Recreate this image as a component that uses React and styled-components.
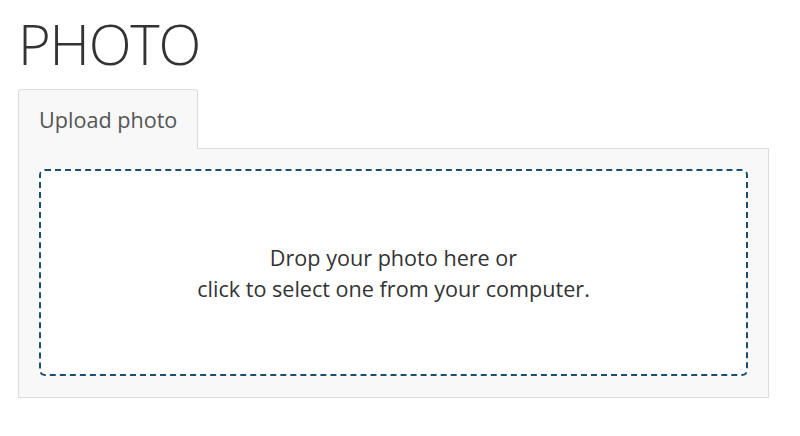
import React from 'react';
import styled, { createGlobalStyle } from 'styled-components';

const GlobalStyle = createGlobalStyle`
  body {
    margin: 0;
    background: #fff;
    font-family: "Open Sans", "Liberation Sans", sans-serif;
    color: #333;
  }
`;

const Page = styled.div`
  padding: 10px 18px 0 18px;
  width: 751px;
`;

const Title = styled.h1`
  margin: 0 0 13px 0;
  font-size: 56px;
  font-weight: 300;
  line-height: 66px;
  color: #333;
  letter-spacing: -1.2px;
`;

const Tabs = styled.div`
  display: flex;
`;

const Tab = styled.div`
  position: relative;
  z-index: 1;
  margin-bottom: -1px;
  padding: 0 20px;
  height: 59px;
  display: flex;
  align-items: center;
  font-size: 21.6px;
  color: #555;
  background: ${(p) => (p.active ? '#f8f8f8' : 'transparent')};
  border: 1px solid #ddd;
  border-bottom: none;
  border-radius: 4px 4px 0 0;
`;

const Panel = styled.div`
  background: #f8f8f8;
  border: 1px solid #ddd;
  padding: 20px 20px 21px 20px;
`;

const DropZone = styled.div`
  height: 203px;
  background: #fff;
  border: 2px dashed #1b4f6e;
  border-radius: 6px;
  display: flex;
  align-items: center;
  justify-content: center;
  text-align: center;
  font-size: 21.6px;
  line-height: 31px;
  color: #333;
  cursor: pointer;
`;

export default function App() {
  return (
    <>
      <GlobalStyle />
      <Page>
        <Title>PHOTO</Title>
        <Tabs>
          <Tab active>Upload photo</Tab>
        </Tabs>
        <Panel>
          <DropZone>
            <div>
              Drop your photo here or
              <br />
              click to select one from your computer.
            </div>
          </DropZone>
        </Panel>
      </Page>
    </>
  );
}
